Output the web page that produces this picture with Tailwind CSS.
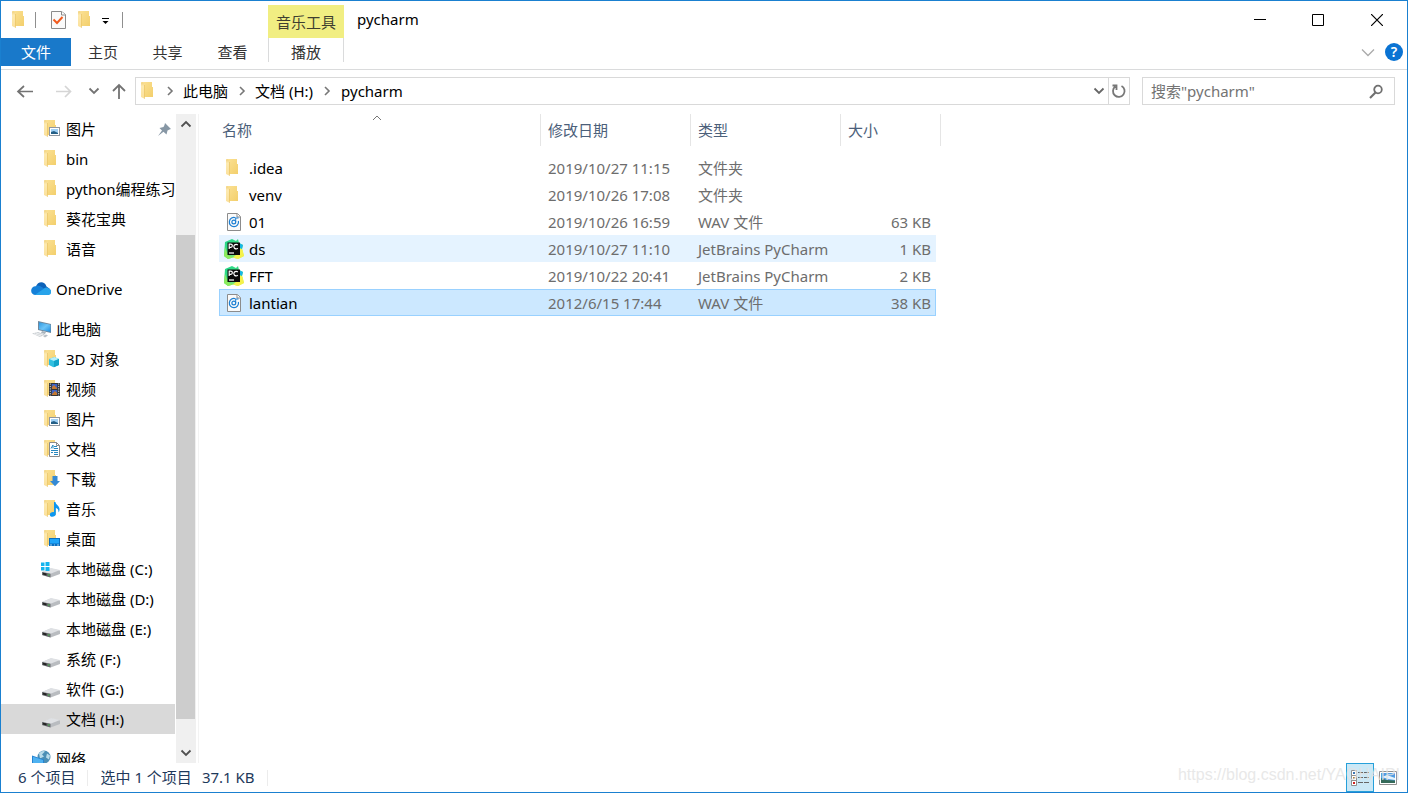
<!DOCTYPE html>
<html lang="zh-CN">
<head>
<meta charset="utf-8">
<title>pycharm</title>
<script src="https://cdn.jsdelivr.net/npm/@tailwindcss/browser@4"></script>
</head>
<body class="relative flex h-screen flex-col overflow-hidden border border-[#1a80d0] bg-white font-['Noto_Sans','Noto_Sans_CJK_SC',sans-serif] text-[15px] leading-5 text-black">

<svg class="absolute size-0" aria-hidden="true">
  <defs>
    <linearGradient id="gold" x1="0" y1="0" x2="1" y2="1"><stop offset="0" stop-color="#fbe194"/><stop offset="1" stop-color="#f3cf6c"/></linearGradient>
    <linearGradient id="flapg" x1="0" y1="0" x2="0" y2="1"><stop offset="0" stop-color="#f0ce78"/><stop offset=".25" stop-color="#fdeab0"/><stop offset="1" stop-color="#fbe09a"/></linearGradient>
    <linearGradient id="screen" x1="0" y1="0" x2="1" y2="1"><stop offset="0" stop-color="#2e97e0"/><stop offset=".5" stop-color="#6cc4f7"/><stop offset="1" stop-color="#1c8be0"/></linearGradient>
    <linearGradient id="pcg" x1="0" y1="0" x2="1" y2="1"><stop offset="0" stop-color="#21d789"/><stop offset=".5" stop-color="#3ddc84"/><stop offset="1" stop-color="#fcf84a"/></linearGradient>
    <symbol id="folder" viewBox="0 0 20 20">
      <path d="M3 1H13V6H14V16H4Z" fill="url(#gold)"/>
      <path d="M2 1.5L3 1 5.5 3.5V17.8L2 16Z" fill="url(#flapg)"/>
      <path d="M5.5 4V17.8" stroke="#e8bd58" stroke-width=".6"/>
    </symbol>
    <symbol id="pictures" viewBox="0 0 20 20">
      <use href="#folder"/><rect x="7.5" y="8.5" width="10" height="8" fill="#fff" stroke="#9097a0"/>
      <rect x="9" y="10" width="7" height="5" fill="#9fd0f5"/><path d="M9 13L12 12 16 14V15H9Z" fill="#245f86"/>
    </symbol>
    <symbol id="objects" viewBox="0 0 20 20">
      <use href="#folder"/><path d="M7 10L12.5 8 17 10V16L11.5 18.3 7 16Z" fill="#31bfe0"/><path d="M7 10L12.5 8 17 10 12 12Z" fill="#b5eefa"/><path d="M12 12L17 10V16L12 18.3Z" fill="#12a3c9"/>
    </symbol>
    <symbol id="videos" viewBox="0 0 20 20">
      <use href="#folder"/><path d="M7 4H18V17H7Z" fill="#353535"/><path d="M8.3 4.5V17M16.7 4.5V17" stroke="#ddd" stroke-dasharray="1.2 1.2"/><path d="M9.8 5H15.2V10H9.8ZM9.8 11H15.2V16H9.8Z" fill="#3b62c5"/><path d="M10 8L12 6 15 9V10H10ZM10 15L13 12 15 14V16H10Z" fill="#c5782f"/>
    </symbol>
    <symbol id="documents" viewBox="0 0 20 20">
      <use href="#folder"/><path d="M7.5 3.5H14.5L17.5 6.5V17.5H7.5Z" fill="#fff" stroke="#8b8b8b"/><path d="M14.5 3.5V6.5H17.5" fill="none" stroke="#8b8b8b"/><path d="M9 9.5L11 6V9.5M12 7.5H15M12 9.5H16M9 11.5H16M9 13.5H11M12 13.5H16M12 15.5H16" fill="none" stroke="#2888bf"/>
    </symbol>
    <symbol id="downloads" viewBox="0 0 20 20">
      <use href="#folder"/><path d="M10.5 7H15.5V12H18L13 17.3 8 12H10.5Z" fill="#3489d4"/>
    </symbol>
    <symbol id="music" viewBox="0 0 20 20">
      <use href="#folder"/><path d="M12 3H13.5C13.5 6 18 6.500 17.500 11C17.300 12.500 16.800 13 16.500 13.500C16.800 10.500 15.500 9.500 13.800 9V15C13.800 17 11.500 18 9.500 17.700C7 17 7.500 13.500 10.200 13.200C11 13 11.500 13 12 13.200Z" fill="#0c96f0"/>
    </symbol>
    <symbol id="desktop" viewBox="0 0 20 20">
      <use href="#folder"/><rect x="7" y="9" width="11" height="8" fill="#0b6fc0"/><path d="M8 10H17V14.500H8Z" fill="#1fa5fa"/><path d="M8 16H10M12 16H13M15 16H17" stroke="#c8ecff" stroke-width=".8"/>
    </symbol>
    <symbol id="drive" viewBox="0 0 20 20">
      <path d="M0 13L9 9.500 18 11.500V15L8.500 18.500 0 16Z" fill="#b9bcc0"/><path d="M0 13L9 9 18 11 8.500 14.800Z" fill="#dfe1e4"/><path d="M0 13L8.500 14.800V18.500L0 16Z" fill="#66696c"/><path d="M1 13.800L4.500 14.600V16.500L1 15.500Z" fill="#222"/><path d="M6 16H7.500" stroke="#3fca43" stroke-width="1.200"/>
    </symbol>
    <symbol id="wav" viewBox="0 0 20 20">
      <path d="M3.500 1.500H13.500L16.500 4.500V18.500H3.500Z" fill="#fafafa" stroke="#8c8c8c"/><path d="M13 1.500V5H16.500" fill="#fff" stroke="#8c8c8c"/><path d="M11.500 5.700A4.600 4.600 0 1 0 14.400 9" fill="none" stroke="#1c7fd3" stroke-width="1.200"/><circle cx="9.800" cy="10" r="1.900" fill="none" stroke="#1c7fd3" stroke-width="1.200"/><path d="M11.700 10V6H14.500" fill="none" stroke="#1c7fd3"/>
    </symbol>
    <symbol id="pycharm" viewBox="0 0 20 20">
      <path d="M1 3L8 0 12 2 14 0 15 4 19 6 18 10 20 17 14 20 9 18.500 4 20 0 17Z" fill="url(#pcg)"/><path d="M15 4L19 6 18 10 16 9Z" fill="#16b6e8"/><path d="M16 9.500L18.500 10.500 20 17 14 20 9 18.500 12 16H16Z" fill="#f4f14b"/><path d="M0 17L1 8 4 16 9 18.500 4 20Z" fill="#8ceb5c"/><rect x="3.500" y="3.500" width="12.500" height="12.500" fill="#0a0a0a"/><path d="M5.200 10V5.200H6.800A1.500 1.500 0 0 1 6.800 8.300H5.400M13.800 6A2.300 2.300 0 1 0 13.800 9.200" fill="none" stroke="#fff" stroke-width="1.200"/><path d="M5 14H10" stroke="#fff" stroke-width="1.200"/>
    </symbol>
    <symbol id="down" viewBox="0 0 12 12"><path d="M1.500 3.500L6 8 10.500 3.500" fill="none" stroke="currentColor" stroke-width="1.800"/></symbol>
    <symbol id="right" viewBox="0 0 12 12"><path d="M4 2L8 6 4 10" fill="none" stroke="#777" stroke-width="1.600"/></symbol>
  </defs>
</svg>

<header class="shrink-0 border-b border-[#dadbdc] pb-[3px]">
  <div class="flex h-[37px]">
    <div class="flex w-[267px] items-center pl-[9px]">
      <svg class="size-5"><use href="#folder"/></svg>
      <span class="ml-[5px] h-4 w-px bg-[#8f8f8f]"></span>
      <button aria-label="属性" class="ml-3"><svg class="size-5" viewBox="0 0 20 20"><path d="M3.500 1.500H13.500L17.500 4.500V18.500H3.500Z" fill="#fafafa" stroke="#8b8b8b"/><path d="M13.500 1.500V5H17.500" fill="#fff" stroke="#8b8b8b"/><path d="M5.500 9.500L9 13 14.500 7" fill="none" stroke="#f05a1e" stroke-width="2"/></svg></button>
      <button aria-label="新建文件夹" class="ml-2"><svg class="size-5"><use href="#folder"/></svg></button>
      <button aria-label="自定义快速访问工具栏" class="ml-1"><svg class="size-3" viewBox="0 0 12 12"><path d="M2 4.500H9" stroke="#000"/><path d="M2.500 7H8.500L5.500 10Z"/></svg></button>
      <span class="ml-[10px] h-4 w-px bg-[#8f8f8f]"></span>
    </div>
    <div class="mt-1 flex w-[76px] items-center justify-center bg-[#f1ee82] text-[#3f3f30]">音乐工具</div>
    <h1 class="ml-[13px] self-center pb-px">pycharm</h1>
    <div class="ml-auto flex">
      <button aria-label="最小化" class="flex w-[58px] items-center justify-center"><svg class="size-3" viewBox="0 0 12 12"><path d="M0 5.500H12" stroke="#000"/></svg></button>
      <button aria-label="最大化" class="flex w-[58px] items-center justify-center"><svg class="size-3" viewBox="0 0 12 12"><path d="M.5 .5H11.500V11.500H.5Z" fill="none" stroke="#000"/></svg></button>
      <button aria-label="关闭" class="flex w-[60px] items-center justify-center"><svg class="size-3" viewBox="0 0 12 12"><path d="M0 0L12 12M12 0L0 12" stroke="#000" stroke-width="1.200"/></svg></button>
    </div>
  </div>
  <nav aria-label="功能区" class="flex h-7 text-[#333]">
    <button class="w-[70px] bg-[#1979ca] text-white">文件</button>
    <button class="w-16">主页</button>
    <button class="w-[65px]">共享</button>
    <button class="w-[65px]">查看</button>
    <button class="ml-[3px] h-6 w-[76px] border-x border-[#dadbdc] pt-1">播放</button>
    <button aria-label="展开功能区" class="ml-auto text-[#aaa]"><svg class="h-4 w-[14px]" viewBox="0 0 14 16"><path d="M1 5.500L7 11.500 13 5.500" fill="none" stroke="currentColor" stroke-width="1.300"/></svg></button>
    <button aria-label="帮助" class="mr-1 ml-[10px] size-[18px] self-center rounded-full bg-[#0a73d3] text-sm leading-[18px] font-semibold text-white">?</button>
  </nav>
</header>

<div class="flex h-11 shrink-0 items-center pr-3 pb-[2px]">
  <div class="flex w-[134px] items-center pl-[15px] text-[#737373]">
    <button aria-label="后退"><svg class="h-4 w-[18px]" viewBox="0 0 18 16"><path d="M17 8.500H2M8 3L2 8.500 8 14" fill="none" stroke="currentColor" stroke-width="1.700"/></svg></button>
    <button aria-label="前进" class="ml-[21px] text-[#d5d5d5]"><svg class="h-4 w-[18px]" viewBox="0 0 18 16"><path d="M1 8.500H15M10 3L15.500 8.500 10 14" fill="none" stroke="currentColor" stroke-width="1.700"/></svg></button>
    <button aria-label="最近浏览的位置" class="ml-[15px]"><svg class="size-3"><use href="#down"/></svg></button>
    <button aria-label="上移" class="ml-[11px]"><svg class="size-4" viewBox="0 0 16 16"><path d="M8 16V2M2 8L8 2 14 8" fill="none" stroke="currentColor" stroke-width="1.800"/></svg></button>
  </div>
  <div class="flex h-7 flex-1 items-center border border-[#d9d9d9] pl-[3px]">
    <svg class="size-5"><use href="#folder"/></svg>
    <svg class="ml-[5px] size-3"><use href="#right"/></svg>
    <a href="#" class="ml-[7px] pb-px">此电脑</a>
    <svg class="ml-2 size-3"><use href="#right"/></svg>
    <a href="#" class="ml-[7px] pb-px">文档 (H:)</a>
    <svg class="ml-2 size-3"><use href="#right"/></svg>
    <a href="#" class="ml-2 pb-px">pycharm</a>
    <button aria-label="历史记录" class="mr-[3px] ml-auto text-[#666]"><svg class="size-3"><use href="#down"/></svg></button>
    <button aria-label="刷新" class="flex h-full w-[21px] items-center justify-center border-l border-[#d9d9d9] text-[#777]"><svg class="size-4" viewBox="0 0 16 16"><path d="M10.500 3A5.800 5.800 0 1 1 4.300 3.500M1.500 2.500H5.500V7" fill="none" stroke="currentColor" stroke-width="1.800"/></svg></button>
  </div>
  <label class="ml-3 flex h-7 w-[253px] items-center border border-[#d9d9d9] pr-[10px] pl-2">
    <input type="search" aria-label="搜索" placeholder='搜索"pycharm"' class="min-w-0 flex-1 outline-none placeholder:text-[#737373]">
    <svg class="size-4 text-[#707070]" viewBox="0 0 16 16"><circle cx="10" cy="6.500" r="3.800" fill="none" stroke="currentColor" stroke-width="1.800"/><path d="M7.500 9.500L2 15" stroke="currentColor" stroke-width="2.200"/></svg>
  </label>
</div>

<div class="flex min-h-0 flex-1">
  <nav aria-label="导航窗格" class="w-[174px] shrink-0 overflow-hidden whitespace-nowrap">
    <ul class="[&_a]:flex [&_a]:h-[30px] [&_a]:items-center [&_a]:gap-1 [&_svg]:size-5 [&_svg]:shrink-0">
      <li class="relative"><a href="#" class="pl-[41px]"><svg><use href="#pictures"/></svg>图片</a>
        <svg class="absolute top-[6px] right-px" viewBox="0 0 20 20"><path d="M11 3L17 9 15.500 9.500 13.500 10.500 12.500 14.500 9.500 11.800 4 16 8 10.500 5.500 8 9.500 7 10.500 5Z" fill="#8797a5"/></svg></li>
      <li><a href="#" class="pl-[41px]"><svg><use href="#folder"/></svg>bin</a></li>
      <li><a href="#" class="pl-[41px]"><svg><use href="#folder"/></svg>python编程练习</a></li>
      <li><a href="#" class="pl-[41px]"><svg><use href="#folder"/></svg>葵花宝典</a></li>
      <li><a href="#" class="pl-[41px]"><svg><use href="#folder"/></svg>语音</a></li>
      <li class="mt-[10px]"><a href="#" class="pl-[30px]"><svg viewBox="0 0 20 20"><path d="M5 7.500C6.500 2.500 13.500 1.500 15.500 7.500L19 10 12 13Z" fill="#0d62b8"/><path d="M4.500 16A4.300 4.300 0 0 1 4.500 7.300C7 5.500 9 7 13 9.500L17 13 8 16Z" fill="#1580d8"/><path d="M4 15.800L12.500 10C14 8.500 16.500 8 17.800 9.500C21.500 10.500 21 16 17 16H4.500Z" fill="#28a3ea"/></svg><span class="ml-px">OneDrive</span></a></li>
      <li class="mt-[10px]"><a href="#" class="pl-[30px]"><svg viewBox="0 0 20 20"><path d="M7 2L20 5V14L7 11Z" fill="#70879b"/><path d="M8 3.200L19.500 5.800V13L8 10.300Z" fill="url(#screen)"/><path d="M11 12L15 13 14 15 10 14Z" fill="#a8b3bc"/><path d="M1 14.500L7 13 14 15.500 9 18Z" fill="#c8cdd1"/><path d="M3 14.800L10 17M5 14L12 16" stroke="#fff" stroke-width=".7"/><path d="M12 17L15 15.500 17 16.500 14 18.500Z" fill="#b9c0c6"/></svg><span class="ml-px">此电脑</span></a></li>
      <li><a href="#" class="pl-[41px]"><svg><use href="#objects"/></svg>3D 对象</a></li>
      <li><a href="#" class="pl-[41px]"><svg><use href="#videos"/></svg>视频</a></li>
      <li><a href="#" class="pl-[41px]"><svg><use href="#pictures"/></svg>图片</a></li>
      <li><a href="#" class="pl-[41px]"><svg><use href="#documents"/></svg>文档</a></li>
      <li><a href="#" class="pl-[41px]"><svg><use href="#downloads"/></svg>下载</a></li>
      <li><a href="#" class="pl-[41px]"><svg><use href="#music"/></svg>音乐</a></li>
      <li><a href="#" class="pl-[41px]"><svg><use href="#desktop"/></svg>桌面</a></li>
      <li><a href="#" class="pl-[41px]"><svg class="overflow-visible" viewBox="0 0 20 20"><use href="#drive"/><path d="M-1 3.500H2.500V7H-1ZM3.500 3H7.500V7H3.500ZM-1 8H2.500V11.500H-1ZM3.500 8H7.500V12H3.500Z" fill="#16b5ee"/></svg>本地磁盘 (C:)</a></li>
      <li><a href="#" class="pl-[41px]"><svg><use href="#drive"/></svg>本地磁盘 (D:)</a></li>
      <li><a href="#" class="pl-[41px]"><svg><use href="#drive"/></svg>本地磁盘 (E:)</a></li>
      <li><a href="#" class="pl-[41px]"><svg><use href="#drive"/></svg>系统 (F:)</a></li>
      <li><a href="#" class="pl-[41px]"><svg><use href="#drive"/></svg>软件 (G:)</a></li>
      <li><a href="#" aria-current="page" class="bg-[#d9d9d9] pl-[41px]"><svg><use href="#drive"/></svg>文档 (H:)</a></li>
      <li class="mt-[10px]"><a href="#" class="pl-[30px]"><svg viewBox="0 0 20 20"><circle cx="13" cy="8" r="6.500" fill="#4b8fb5"/><path d="M8 4.500C10 1.500 13 1.500 14 2.500L11 5.500 13 7.500 9 9.500ZM16 4.500L19 6.500 18 10.500 15 8.500Z" fill="#b9dcea"/><path d="M1 6.500L13 10.500V18.500L1 16.500Z" fill="#2583d2"/><path d="M2 7.700L12 11V17.500L2 15.500Z" fill="#4fb2f1"/></svg><span class="ml-px">网络</span></a></li>
    </ul>
  </nav>
  <div class="ml-px flex w-5 shrink-0 flex-col bg-[#f0f0f0] pr-px text-[#505050]" role="scrollbar" aria-controls="files" aria-valuenow="80" aria-orientation="vertical">
    <button aria-label="向上滚动" class="flex h-5 items-center justify-center"><svg class="size-3 rotate-180"><use href="#down"/></svg></button>
    <div class="flex-[101]"></div>
    <div class="flex-[484] bg-[#cdcdcd]"></div>
    <div class="flex-[24]"></div>
    <button aria-label="向下滚动" class="flex h-5 items-center justify-center"><svg class="size-3"><use href="#down"/></svg></button>
  </div>
  <main id="files" class="ml-[2px] flex-1 border-l border-[#f3f3f3] pl-5">
    <table class="w-[722px] table-fixed border-separate border-spacing-0 text-left text-[#6d6d6d] [&_td]:p-0 [&_tbody_td]:h-[27px]">
      <colgroup><col class="w-[322px]"><col class="w-[150px]"><col class="w-[150px]"><col class="w-[95px]"><col class="w-[5px]"></colgroup>
      <thead class="text-[#4c607a] [&_button]:block [&_button]:h-8 [&_button]:w-full [&_button]:text-left [&_th]:border-r [&_th]:border-[#e5e5e5] [&_th]:p-0 [&_th]:font-normal">
        <tr>
          <th class="relative" aria-sort="ascending"><button class="pl-[3px]">名称</button><svg class="absolute top-0 left-[152px] h-2 w-3" viewBox="0 0 12 8"><path d="M2 6L6 2 10 6" fill="none" stroke="#777"/></svg></th>
          <th><button class="pl-[7px]">修改日期</button></th>
          <th><button class="pl-[7px]">类型</button></th>
          <th colspan="2"><button class="pl-[7px]">大小</button></th>
        </tr>
      </thead>
      <tbody class="[&_svg]:size-5 [&_td>span]:flex [&_td>span]:items-center [&_td>span]:gap-[5px] [&_td>span]:pl-[5px] [&_td>span]:text-black">
        <tr aria-hidden="true"><td colspan="5" class="h-2!"></td></tr>
        <tr><td><span><svg><use href="#folder"/></svg>.idea</span></td><td class="pl-[7px]!">2019/10/27 11:15</td><td class="pl-[7px]!">文件夹</td><td></td><td></td></tr>
        <tr><td><span><svg><use href="#folder"/></svg>venv</span></td><td class="pl-[7px]!">2019/10/26 17:08</td><td class="pl-[7px]!">文件夹</td><td></td><td></td></tr>
        <tr><td><span><svg><use href="#wav"/></svg>01</span></td><td class="pl-[7px]!">2019/10/26 16:59</td><td class="pl-[7px]!">WAV 文件</td><td class="pr-[5px]! text-right">63 KB</td><td></td></tr>
        <tr><td class="bg-[#e5f3ff]"><span><svg><use href="#pycharm"/></svg>ds</span></td><td class="bg-[#e5f3ff] pl-[7px]!">2019/10/27 11:10</td><td class="bg-[#e5f3ff] pl-[7px]!">JetBrains PyCharm</td><td class="bg-[#e5f3ff] pr-[5px]! text-right">1 KB</td><td></td></tr>
        <tr><td><span><svg><use href="#pycharm"/></svg>FFT</span></td><td class="pl-[7px]!">2019/10/22 20:41</td><td class="pl-[7px]!">JetBrains PyCharm</td><td class="pr-[5px]! text-right">2 KB</td><td></td></tr>
        <tr aria-selected="true"><td class="border-y border-l border-[#99d1ff] bg-[#cce8ff]"><span class="-ml-px"><svg><use href="#wav"/></svg>lantian</span></td><td class="border-y border-[#99d1ff] bg-[#cce8ff] pl-[7px]!">2012/6/15 17:44</td><td class="border-y border-[#99d1ff] bg-[#cce8ff] pl-[7px]!">WAV 文件</td><td class="border-y border-r border-[#99d1ff] bg-[#cce8ff] pr-1! text-right">38 KB</td><td></td></tr>
      </tbody>
    </table>
  </main>
</div>

<footer class="flex h-[29px] shrink-0 items-center pl-[17px] text-[#1e395b]">
  <span class="pb-px">6 个项目</span>
  <span class="ml-3 h-4 w-px bg-[#ececec]"></span>
  <span class="ml-3 pb-px">选中 1 个项目</span>
  <span class="ml-[10px] pb-px">37.1 KB</span>
  <span class="ml-3 h-4 w-px bg-[#ececec]"></span>
  <div class="mr-[10px] ml-auto flex h-full items-center gap-[5px]">
    <button aria-label="详细信息" class="flex h-full w-7 items-center justify-center border border-[#26a0da] bg-[#cbe8f6]"><svg class="h-4 w-5" viewBox="0 0 20 16"><path d="M1.500 .5H6.500V5.500H1.500ZM1.500 5.500H6.500V10.500H1.500ZM1.500 10.500H6.500V15.500H1.500Z" fill="#fff" stroke="#8f8f8f"/><path d="M3 3H5" stroke="#3c78b4" stroke-width="2"/><path d="M3 8H5" stroke="#b58a35" stroke-width="2"/><path d="M3 13H5" stroke="#d02020" stroke-width="2"/><path d="M8 2.500H13M14 2.500H19M8 7.500H13M14 7.500H19M8 12.500H13M14 12.500H19" stroke="#666"/></svg></button>
    <button aria-label="大图标"><svg class="h-[14px] w-[18px]" viewBox="0 0 18 14"><path d="M.5 .5H17.500V13.500H.5Z" fill="#fff" stroke="#8f8f8f"/><path d="M2 2H16V12H2Z" fill="#4e9ce3"/><path d="M3 6L8 4 16 7V9L9 8Z" fill="#e6f3fc"/><path d="M2 7L7 9 16 9.500V12H2Z" fill="#356a59"/></svg></button>
  </div>
</footer>

<div class="pointer-events-none absolute right-[7px] bottom-[7px] font-['Liberation_Sans',sans-serif] text-base leading-5 text-[#e2e2e2]/80">https://blog.csdn.net/YAOHAIPI</div>
</body>
</html>
